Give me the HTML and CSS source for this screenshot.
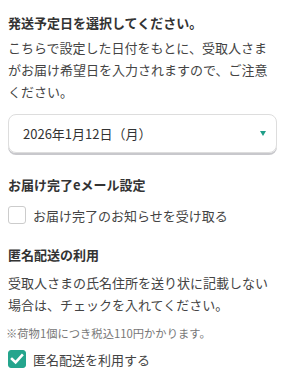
FILE: index.html
```html
<!DOCTYPE html>
<html lang="ja">
<head>
<meta charset="utf-8">
<link rel="stylesheet" href="styles.css">
</head>
<body>
<div class="page">
  <h2 class="title">発送予定日を選択してください。</h2>
  <p class="text first">こちらで設定した日付をもとに、受取人さまがお届け希望日を入力されますので、ご注意ください。</p>
  <div class="select">
    <span class="select-value">2026年1月12日（月）</span>
    <span class="caret"></span>
  </div>
  <h2 class="title sec2">お届け完了eメール設定</h2>
  <label class="check row1"><span class="box"></span><span class="lbl">お届け完了のお知らせを受け取る</span></label>
  <h2 class="title sec3">匿名配送の利用</h2>
  <p class="text second">受取人さまの氏名住所を送り状に記載しない場合は、チェックを入れてください。</p>
  <p class="note">※荷物1個につき税込110円かかります。</p>
  <label class="check row2"><span class="box on"><svg viewBox="0 0 18 18" width="18" height="18"><path d="M4 9 L7.6 12.4 L14 5.4" fill="none" stroke="#fff" stroke-width="2.6" stroke-linecap="square"/></svg></span><span class="lbl">匿名配送を利用する</span></label>
</div>
</body>
</html>
```
FILE: styles.css
```css
html, body { margin: 0; padding: 0; background: #fff; }
body { font-family: "Noto Sans CJK JP", "Noto Sans", sans-serif; color: #333; }
.page { padding: 0 8px 0 8px; width: 267px; }
.title { font-size: 13px; font-weight: 700; line-height: 20px; margin: 13px 0 0 0; color: #333; }
.text { font-size: 13px; line-height: 22px; margin: 2px 0 0 0; color: #444; }
.first { margin-top: 4px; }
.select { margin-top: 11px; height: 39px; box-sizing: border-box; border: 1px solid #ddd; border-radius: 8px; box-shadow: 0 2px 0 #c8c8cc; display: flex; align-items: center; justify-content: space-between; padding: 0 10px 0 14px; width: 269px; }
.select-value { font-size: 13px; color: #333; }
.caret { width: 0; height: 0; border-left: 3px solid transparent; border-right: 3px solid transparent; border-top: 5px solid #1f9e88; }
.sec2 { margin-top: 22px; }
.check { display: flex; align-items: center; height: 18px; }
.row1 { margin-top: 11px; }
.box { width: 18px; height: 18px; box-sizing: border-box; border: 1px solid #ccc; border-radius: 3px; display: inline-block; flex: none; }
.box.on { background: #24a58d; border-color: #24a58d; }
.box.on svg { display: block; margin: -1px; }
.lbl { margin-left: 7px; font-size: 13px; color: #444; }
.sec3 { margin-top: 21px; }
.second { margin-top: 7px; }
.note { font-size: 11.3px; line-height: 16px; color: #777; margin: 9px 0 0 -2px; }
.row2 { margin-top: 9px; }
```
